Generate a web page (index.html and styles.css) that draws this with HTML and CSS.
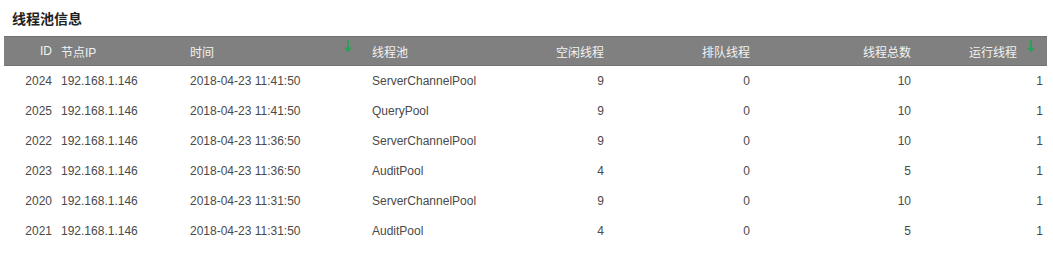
FILE: index.html
```html
<!DOCTYPE html>
<html lang="zh-CN">
<head>
<meta charset="utf-8">
<title>线程池信息</title>
<link rel="stylesheet" href="styles.css">
</head>
<body>
<div class="panel">
  <h3 class="title">线程池信息</h3>
  <table class="grid">
    <colgroup>
      <col class="c-id"><col class="c-ip"><col class="c-time"><col class="c-pool">
      <col class="c-idle"><col class="c-queue"><col class="c-total"><col class="c-run">
    </colgroup>
    <thead>
      <tr>
        <th class="num">ID</th>
        <th>节点IP</th>
        <th class="sorted">时间<svg class="sort" width="8" height="12" viewBox="0 0 8 12"><path d="M4 0V11M1 7.5L4 11L7 7.5" fill="none" stroke="#28a058" stroke-width="1.8"/></svg></th>
        <th>线程池</th>
        <th class="num">空闲线程</th>
        <th class="num">排队线程</th>
        <th class="num">线程总数</th>
        <th class="num sorted last">运行线程<svg class="sort" width="8" height="12" viewBox="0 0 8 12"><path d="M4 0V11M1 7.5L4 11L7 7.5" fill="none" stroke="#28a058" stroke-width="1.8"/></svg></th>
      </tr>
    </thead>
    <tbody>
      <tr><td class="num">2024</td><td>192.168.1.146</td><td>2018-04-23 11:41:50</td><td>ServerChannelPool</td><td class="num">9</td><td class="num">0</td><td class="num">10</td><td class="num">1</td></tr>
      <tr><td class="num">2025</td><td>192.168.1.146</td><td>2018-04-23 11:41:50</td><td>QueryPool</td><td class="num">9</td><td class="num">0</td><td class="num">10</td><td class="num">1</td></tr>
      <tr><td class="num">2022</td><td>192.168.1.146</td><td>2018-04-23 11:36:50</td><td>ServerChannelPool</td><td class="num">9</td><td class="num">0</td><td class="num">10</td><td class="num">1</td></tr>
      <tr><td class="num">2023</td><td>192.168.1.146</td><td>2018-04-23 11:36:50</td><td>AuditPool</td><td class="num">4</td><td class="num">0</td><td class="num">5</td><td class="num">1</td></tr>
      <tr><td class="num">2020</td><td>192.168.1.146</td><td>2018-04-23 11:31:50</td><td>ServerChannelPool</td><td class="num">9</td><td class="num">0</td><td class="num">10</td><td class="num">1</td></tr>
      <tr><td class="num">2021</td><td>192.168.1.146</td><td>2018-04-23 11:31:50</td><td>AuditPool</td><td class="num">4</td><td class="num">0</td><td class="num">5</td><td class="num">1</td></tr>
    </tbody>
  </table>
</div>
</body>
</html>
```

FILE: styles.css
```css
html, body {
  margin: 0;
  padding: 0;
  background: #ffffff;
}

body {
  font-family: "Liberation Sans", "Noto Sans CJK SC", Arial, sans-serif;
  font-size: 12px;
  color: #444444;
}

.panel {
  padding: 4px;
}

.title {
  margin: 5px 0 7px 0;
  padding-left: 8px;
  font-size: 14px;
  line-height: 20px;
  font-weight: bold;
  color: #222222;
}

.grid {
  width: 1043px;
  border-collapse: collapse;
  table-layout: fixed;
}

.c-id { width: 52px; }
.c-ip { width: 129px; }
.c-time { width: 182px; }
.c-pool { width: 121px; }
.c-idle { width: 121px; }
.c-queue { width: 146px; }
.c-total { width: 161px; }
.c-run { width: 131px; }

.grid th {
  height: 28px;
  padding: 0 5px;
  background: #808080;
  border-top: 1px solid #727272;
  border-bottom: 1px solid #747474;
  color: #f2f2f2;
  font-weight: normal;
  text-align: left;
  white-space: nowrap;
}

.grid td {
  height: 30px;
  padding: 0 5px;
  white-space: nowrap;
  color: #4a4a4a;
}

.grid .num {
  text-align: right;
}

.grid th:first-child,
.grid td:first-child {
  padding-right: 4px;
}

.grid th.sorted {
  position: relative;
}

.sort {
  position: absolute;
  top: 3px;
  right: 15px;
}

.grid th.last {
  padding-right: 30px;
}

.grid th.last .sort {
  right: 12px;
}

.grid td:last-child {
  padding-right: 4px;
}
```
